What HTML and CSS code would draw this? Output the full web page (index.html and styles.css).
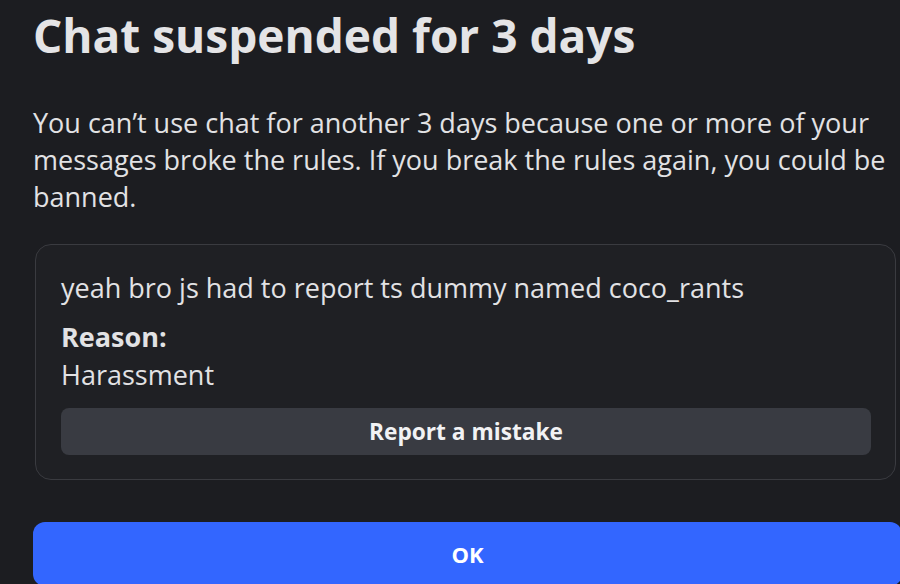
FILE: index.html
```html
<!DOCTYPE html>
<html lang="en">
<head>
<meta charset="utf-8">
<link rel="stylesheet" href="styles.css">
</head>
<body>
<div class="dialog">
  <h1 class="title">Chat suspended for 3 days</h1>
  <p class="desc">You can’t use chat for another 3 days because one or more of your messages broke the rules. If you break the rules again, you could be banned.</p>
  <div class="card">
    <p class="message">yeah bro js had to report ts dummy named coco_rants</p>
    <p class="reason-label">Reason:</p>
    <p class="reason">Harassment</p>
    <button class="report-btn">Report a mistake</button>
  </div>
  <button class="ok-btn">OK</button>
</div>
</body>
</html>
```
FILE: styles.css
```css
* { box-sizing: border-box; }
html, body {
  margin: 0;
  padding: 0;
  background: #1c1d21;
  height: 584px;
  overflow: hidden;
}
body {
  font-family: "Open Sans", "Noto Sans", sans-serif;
  color: #e6e6e8;
}
.dialog {
  padding: 5px 0 0 33px;
  display: flex;
  flex-direction: column;
}
.title {
  margin: 0;
  font-size: 46px;
  font-weight: 700;
  line-height: 60px;
  color: #e4e4e6;
}
.desc {
  margin: 39px 0 0 0;
  font-size: 27px;
  line-height: 37px;
  color: #e2e2e4;
  width: 867px;
}
.card {
  margin: 29px 4px 0 2px;
  border: 1px solid #3a3b40;
  border-radius: 16px;
  background: #1f2024;
  padding: 24px 24px 24px 25px;
  display: flex;
  flex-direction: column;
}
.message, .reason, .reason-label {
  margin: 0;
  font-size: 27px;
  line-height: 38px;
  color: #e2e2e4;
}
.message { margin-bottom: 11px; }
.reason-label { font-weight: 700; }
.report-btn {
  margin-top: 14px;
  height: 47px;
  border: none;
  border-radius: 8px;
  background: #393b42;
  color: #f2f2f4;
  font-family: inherit;
  font-size: 22.7px;
  font-weight: 700;
}
.ok-btn {
  margin-top: 42px;
  height: 64px;
  margin-right: -2px;
  border: none;
  border-radius: 12px;
  background: #3366ff;
  color: #ffffff;
  font-family: inherit;
  font-size: 22px;
  font-weight: 700;
  padding-bottom: 2px;
}
```
